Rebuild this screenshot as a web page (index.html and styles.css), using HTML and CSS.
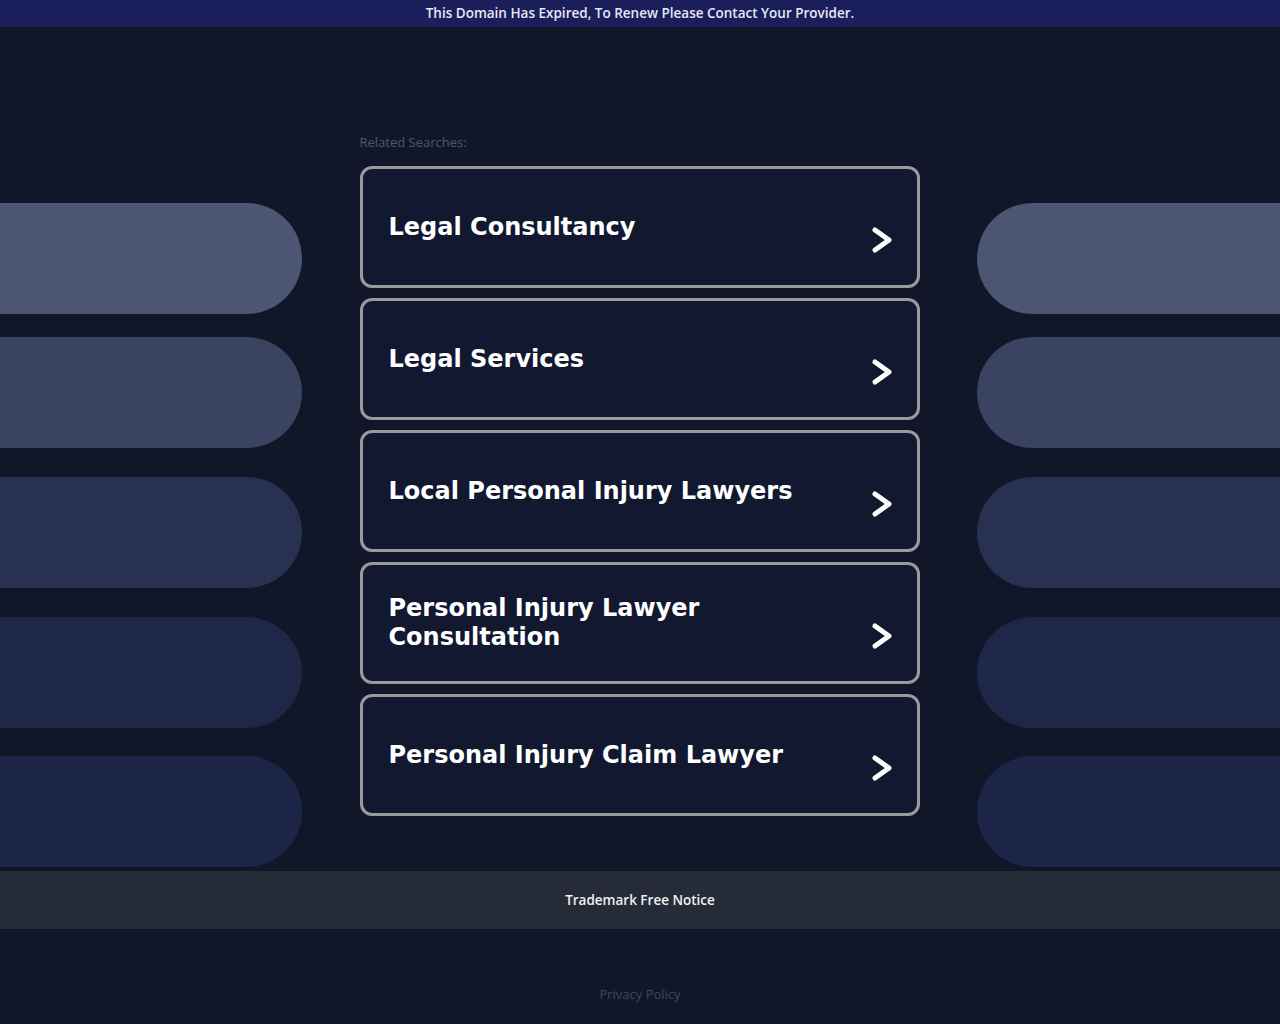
FILE: index.html
```html
<!DOCTYPE html>
<html lang="en">
<head>
<meta charset="utf-8">
<title>Related Searches</title>
<link rel="stylesheet" href="styles.css">
</head>
<body>
<div class="topbar">This Domain Has Expired, To Renew Please Contact Your Provider.</div>
<main class="main">
  <div class="side side-left">
    <div class="pill pill-1"></div>
    <div class="pill pill-2"></div>
    <div class="pill pill-3"></div>
    <div class="pill pill-4"></div>
    <div class="pill pill-5"></div>
  </div>
  <div class="center">
    <div class="label">Related Searches:</div>
    <div class="cards">
      <a class="card" href="#"><span class="card-text">Legal Consultancy</span><svg class="chev" viewBox="0 0 20 26" width="20" height="26"><polyline points="3,3 17,13 3,23"/></svg></a>
      <a class="card" href="#"><span class="card-text">Legal Services</span><svg class="chev" viewBox="0 0 20 26" width="20" height="26"><polyline points="3,3 17,13 3,23"/></svg></a>
      <a class="card" href="#"><span class="card-text">Local Personal Injury Lawyers</span><svg class="chev" viewBox="0 0 20 26" width="20" height="26"><polyline points="3,3 17,13 3,23"/></svg></a>
      <a class="card" href="#"><span class="card-text">Personal Injury Lawyer Consultation</span><svg class="chev" viewBox="0 0 20 26" width="20" height="26"><polyline points="3,3 17,13 3,23"/></svg></a>
      <a class="card" href="#"><span class="card-text">Personal Injury Claim Lawyer</span><svg class="chev" viewBox="0 0 20 26" width="20" height="26"><polyline points="3,3 17,13 3,23"/></svg></a>
    </div>
  </div>
  <div class="side side-right">
    <div class="pill pill-1"></div>
    <div class="pill pill-2"></div>
    <div class="pill pill-3"></div>
    <div class="pill pill-4"></div>
    <div class="pill pill-5"></div>
  </div>
</main>
<footer class="footer">Trademark Free Notice</footer>
<div class="bottom"><a class="privacy" href="#">Privacy Policy</a></div>
</body>
</html>
```
FILE: styles.css
```css
html, body {
  margin: 0;
  padding: 0;
  background: #111729;
}
body {
  font-family: "Open Sans", "Liberation Sans", sans-serif;
  min-height: 1024px;
}
.topbar {
  height: 26px;
  padding-bottom: 1px;
  background: #1a1e5b;
  color: #e6e8f2;
  font-family: "Open Sans", sans-serif;
  font-weight: 600;
  font-size: 13.5px;
  line-height: 18px;
  display: flex;
  align-items: center;
  justify-content: center;
}
.main {
  height: 844px;
  display: flex;
  justify-content: space-between;
}
.side {
  display: flex;
  flex-direction: column;
  padding-top: 176px;
}
.side-left { width: 302px; }
.side-right { width: 303px; }
.pill {
  height: 111px;
}
.side-left .pill { border-radius: 0 56px 56px 0; }
.side-right .pill { border-radius: 56px 0 0 56px; }
.pill-1 { background: #4c5672; }
.pill-2 { background: #3a435f; margin-top: 23px; }
.pill-3 { background: #283151; margin-top: 29px; }
.pill-4 { background: #1e2748; margin-top: 29px; }
.pill-5 { background: #1c2548; margin-top: 28px; }
.center {
  width: 560px;
  padding-top: 107px;
}
.label {
  font-size: 13px;
  line-height: 16px;
  color: #4e5672;
  margin-bottom: 16px;
}
.cards {
  display: flex;
  flex-direction: column;
  gap: 10px;
}
.card {
  box-sizing: border-box;
  height: 122px;
  border: 3px solid #9a9a9e;
  border-radius: 12px;
  background: #121830;
  display: flex;
  align-items: center;
  justify-content: space-between;
  padding: 0 25px 0 26px;
  text-decoration: none;
}
.card-text {
  font-family: "DejaVu Sans", sans-serif;
  font-weight: bold;
  font-size: 24px;
  line-height: 29px;
  color: #ffffff;
  max-width: 440px;
}
.chev {
  flex: none;
  margin-top: 26px;
}
.chev polyline {
  fill: none;
  stroke: #ffffff;
  stroke-width: 5;
  stroke-linecap: round;
  stroke-linejoin: round;
}
.footer {
  height: 57px;
  padding-bottom: 1px;
  background: #252b37;
  color: #f0f0f2;
  font-family: "Open Sans", sans-serif;
  font-weight: 600;
  font-size: 13.5px;
  line-height: 18px;
  display: flex;
  align-items: center;
  justify-content: center;
}
.bottom {
  padding-top: 56px;
  line-height: 16px;
  text-align: center;
}
.privacy {
  font-size: 13px;
  line-height: 16px;
  color: #3e4664;
  text-decoration: none;
}
```
